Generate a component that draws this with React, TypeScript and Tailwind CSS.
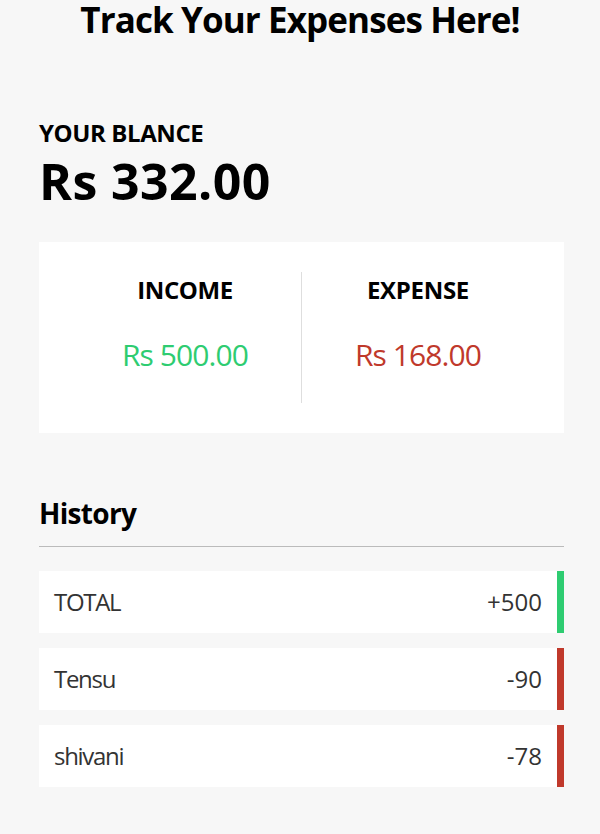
import React from "react";

const rows = [
  { name: "TOTAL", amt: "+500", plus: true },
  { name: "Tensu", amt: "-90", plus: false },
  { name: "shivani", amt: "-78", plus: false },
];

export default function App() {
  return (
    <div
      className="min-h-[834px] bg-[#f7f7f7] text-black"
      style={{ fontFamily: '"Open Sans", "Noto Sans", sans-serif' }}
    >
      <h2 className="m-0 text-center text-[35px] font-bold leading-[40px] tracking-[-0.9px]">
        Track Your Expenses Here!
      </h2>
      <div className="ml-[39px] w-[525px]">
        <h4 className="mt-[79px] text-[24px] font-bold uppercase leading-[28px] tracking-[-0.4px]">
          Your Blance
        </h4>
        <h1 className="mt-[6px] text-[50px] font-bold leading-[56px] tracking-[0.4px]">
          Rs 332.00
        </h1>
        <div className="mt-[33px] flex bg-white px-[30px] py-[30px]">
          <div className="flex h-[131px] flex-1 flex-col items-center border-r border-[#dedede]">
            <h4 className="text-[24px] font-bold uppercase leading-[36px] tracking-[-0.4px]">Income</h4>
            <p className="mt-[27px] text-[30px] leading-[40px] tracking-[-0.9px] text-[#2ecc71]">
              Rs 500.00
            </p>
          </div>
          <div className="flex h-[131px] flex-1 flex-col items-center">
            <h4 className="text-[24px] font-bold uppercase leading-[36px] tracking-[-0.3px]">Expense</h4>
            <p className="mt-[27px] text-[30px] leading-[40px] tracking-[-0.9px] text-[#c0392b]">
              Rs 168.00
            </p>
          </div>
        </div>
        <h3 className="mt-[64px] border-b border-[#bbb] pb-[17px] text-[28px] font-bold leading-[32px] tracking-[-0.7px]">
          History
        </h3>
        <ul className="mt-[24px] flex flex-col gap-[15px]">
          {rows.map((r) => (
            <li
              key={r.name}
              className={`flex justify-between bg-white p-[15px] text-[24px] leading-[32px] text-[#333] border-r-[7px] ${
                r.plus ? "border-[#2ecc71]" : "border-[#c0392b]"
              }`}
            >
              <span className="tracking-[-1.3px]">{r.name}</span>
              <span>{r.amt}</span>
            </li>
          ))}
        </ul>
      </div>
    </div>
  );
}
